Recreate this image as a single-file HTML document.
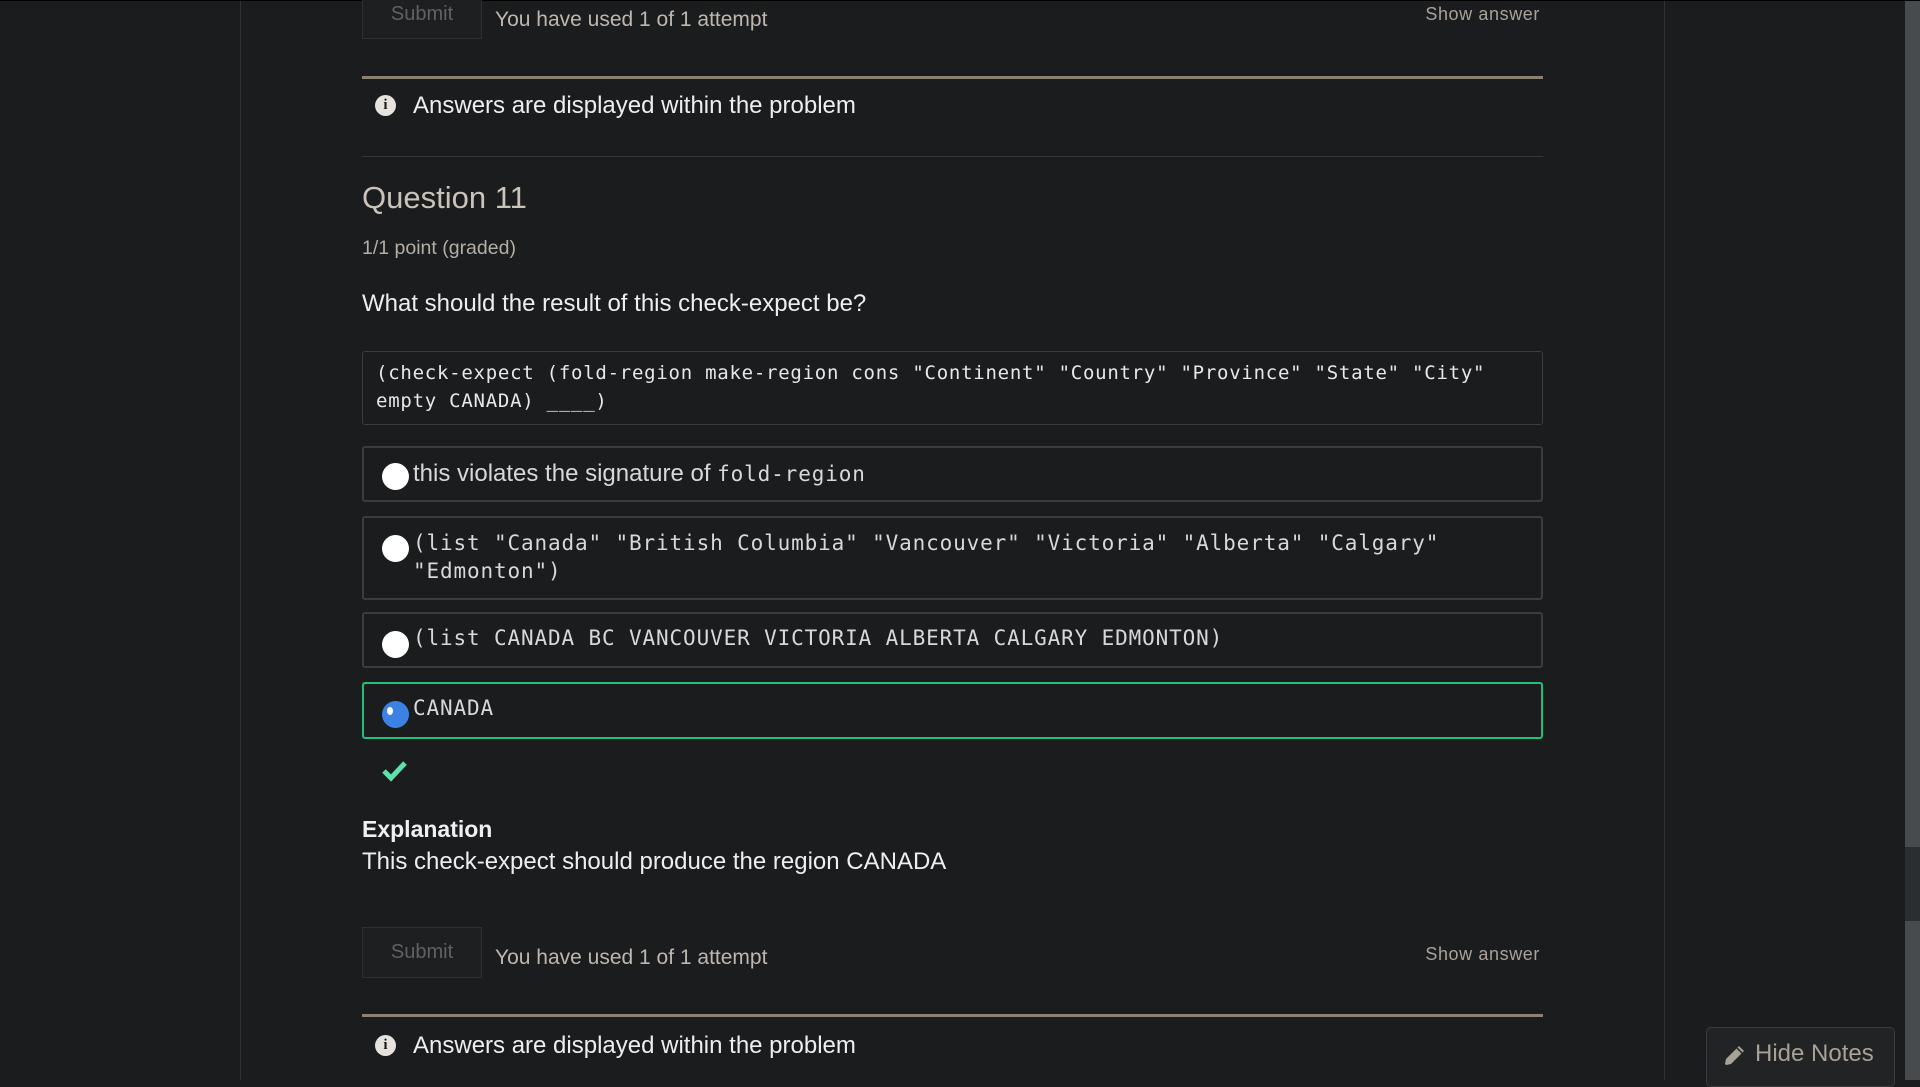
<!DOCTYPE html>
<html><head><meta charset="utf-8"><style>
*{margin:0;padding:0;box-sizing:border-box}
body{width:1920px;height:1080px;overflow:hidden;background:#1b1c1e;font-family:"Liberation Sans",sans-serif;color:#e6e6e6;position:relative}
.ab{position:absolute}
.vl{position:absolute;top:0;width:1px;height:1080px;background:#2f3134}
.btn{position:absolute;left:362px;width:120px;border:1px solid #2e3033;background:#1d1f20;color:#5f6163;font-size:20px;text-align:center}
.used{position:absolute;left:495px;font-size:21px;color:#bdb7ae}
.show{position:absolute;right:380px;font-size:18px;color:#a8a29a;letter-spacing:0.6px}
.brown{position:absolute;left:362px;width:1181px;height:3px;background:#8b8173}
.info{position:absolute;left:375px;width:21px;height:21px;border-radius:50%;background:#e6e3df;color:#1b1c1e;font:bold 15px "Liberation Serif",serif;text-align:center;line-height:21px}
.infot{position:absolute;left:413px;font-size:24px;color:#eeeeee}
.opt{position:absolute;left:362px;width:1181px;border:2px solid #3a3c3f;border-radius:3px}
.rad{position:absolute;left:18px;width:27px;height:27px;border-radius:50%;background:#fff}
.mono{font-family:"DejaVu Sans Mono","Liberation Mono",monospace;white-space:nowrap}
.ot{position:absolute;left:49px;font-size:24px;color:#d8d8d8}
.om{font-size:21px;letter-spacing:0.86px}
</style></head><body>
<div class="vl" style="left:240px"></div>
<div class="vl" style="left:1664px"></div>
<div class="ab" style="left:1905px;top:0;width:15px;height:1080px;background:#474b4e"></div>
<div class="ab" style="left:1905px;top:847px;width:15px;height:74px;background:#2b2e31"></div>
<div class="ab" style="left:0;top:0;width:1920px;height:1px;background:#000"></div>

<div class="btn" style="top:-10px;height:49px;line-height:46px">Submit</div>
<div class="used" style="top:8px">You have used 1 of 1 attempt</div>
<div class="show" style="top:4px">Show answer</div>
<div class="brown" style="top:76px"></div>
<div class="info" style="top:95px">i</div>
<div class="infot" style="top:92px">Answers are displayed within the problem</div>
<div class="ab" style="left:362px;top:156px;width:1181px;height:1px;background:#34363a"></div>

<div class="ab" style="left:362px;top:180px;font-size:31px;color:#c9c3ba">Question 11</div>
<div class="ab" style="left:362px;top:237px;font-size:19.5px;color:#b4aea5">1/1 point (graded)</div>
<div class="ab" style="left:362px;top:290px;font-size:24px;color:#eeeeee">What should the result of this check-expect be?</div>

<div class="ab" style="left:362px;top:351px;width:1181px;height:74px;border:1px solid #3a3c3f;border-radius:3px"></div>
<div class="ab mono" style="left:376px;top:359px;font-size:19px;line-height:28px;letter-spacing:0.75px;color:#e8e8e8">(check-expect (fold-region make-region cons "Continent" "Country" "Province" "State" "City"<br>empty CANADA) ____)</div>

<div class="opt" style="top:446px;height:56px"><div class="rad" style="top:15px"></div><div class="ot" style="top:12px">this violates the signature of <span class="mono om">fold-region</span></div></div>
<div class="opt" style="top:516px;height:84px"><div class="rad" style="top:17px"></div><div class="ot mono om" style="top:11px;line-height:28px">(list "Canada" "British Columbia" "Vancouver" "Victoria" "Alberta" "Calgary"<br>"Edmonton")</div></div>
<div class="opt" style="top:612px;height:56px"><div class="rad" style="top:17px"></div><div class="ot mono om" style="top:12px">(list CANADA BC VANCOUVER VICTORIA ALBERTA CALGARY EDMONTON)</div></div>
<div class="opt" style="top:682px;height:57px;border-color:#20c07a"><div class="rad" style="top:17px;background:#3b82e4"><div class="ab" style="left:5px;top:6px;width:6px;height:8px;border-radius:50%;background:#fff"></div></div><div class="ot mono om" style="top:12px">CANADA</div></div>

<svg class="ab" style="left:382px;top:760px" width="26" height="22" viewBox="0 0 26 22"><path d="M2 11 L9 18 L23 3" stroke="#5ee0a8" stroke-width="5" fill="none"/></svg>

<div class="ab" style="left:362px;top:816px;font-size:23px;font-weight:bold;color:#f0f0f0">Explanation</div>
<div class="ab" style="left:362px;top:848px;font-size:24px;color:#eeeeee">This check-expect should produce the region CANADA</div>

<div class="btn" style="top:927px;height:51px;line-height:48px">Submit</div>
<div class="used" style="top:946px">You have used 1 of 1 attempt</div>
<div class="show" style="top:944px">Show answer</div>
<div class="brown" style="top:1014px"></div>
<div class="info" style="top:1035px">i</div>
<div class="infot" style="top:1032px">Answers are displayed within the problem</div>

<div class="ab" style="left:1706px;top:1027px;width:189px;height:60px;border:1px solid #3a3d40;border-radius:5px;background:#212325">
<svg class="ab" style="left:15px;top:16px" width="24" height="24" viewBox="0 0 24 24"><path d="M17 2 L22 7 L9 20 L4 21 L3 20 L4 15 Z" fill="#a8a196"/><path d="M15 4 L20 9" stroke="#212325" stroke-width="1.5"/></svg>
<div class="ab" style="left:48px;top:12px;font-size:24px;color:#a8a196">Hide Notes</div>
</div>
</body></html>
